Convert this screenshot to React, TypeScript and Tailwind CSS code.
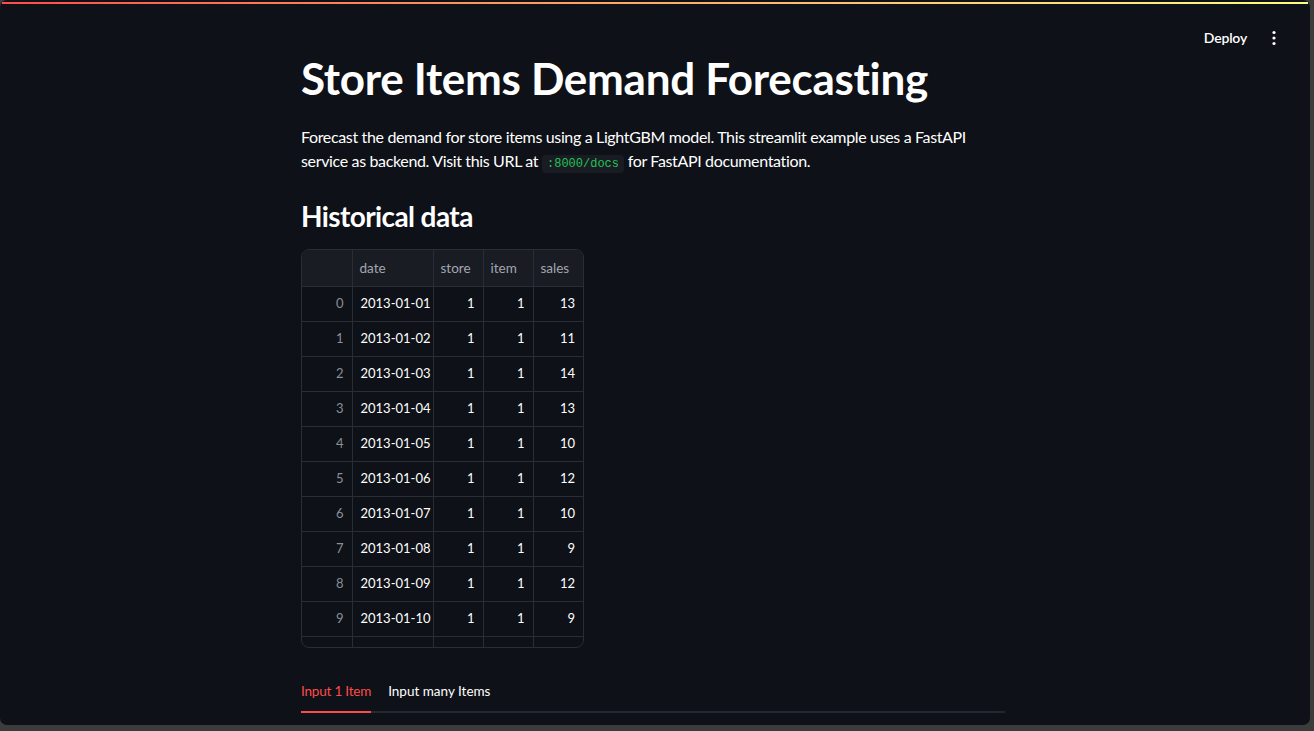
import React from 'react';

const rows = [
  ['2013-01-01', 1, 1, 13],
  ['2013-01-02', 1, 1, 11],
  ['2013-01-03', 1, 1, 14],
  ['2013-01-04', 1, 1, 13],
  ['2013-01-05', 1, 1, 10],
  ['2013-01-06', 1, 1, 12],
  ['2013-01-07', 1, 1, 10],
  ['2013-01-08', 1, 1, 9],
  ['2013-01-09', 1, 1, 12],
  ['2013-01-10', 1, 1, 9],
];

const App = () => {
  return (
    <div className="h-[731px] w-[1314px] overflow-hidden bg-[#3c3c3c] pr-[4px] pb-[6px] font-['Lato',sans-serif]">
      <div className="relative h-full rounded-[7px] bg-[#0e1117] overflow-hidden">
        {/* top decoration */}
        <div className="mx-[2px] mt-[2px] h-[2px] bg-gradient-to-r from-[#ff4b4b] to-[#fffd80]" />

        {/* header toolbar */}
        <div className="absolute top-[27px] right-[28px] flex items-center gap-[19px]">
          <button className="text-[14px] font-semibold text-white tracking-[-0.2px]">Deploy</button>
          <svg width="16" height="16" viewBox="0 0 16 16" className="text-white">
            <circle cx="8" cy="2.5" r="1.6" fill="currentColor" />
            <circle cx="8" cy="8" r="1.6" fill="currentColor" />
            <circle cx="8" cy="13.5" r="1.6" fill="currentColor" />
          </svg>
        </div>

        {/* main block */}
        <div className="mx-auto w-[704px] pt-[46px] -translate-x-[2px]">
          <h1 className="text-[44px] leading-[56px] font-bold text-white tracking-[-0.3px]">
            Store Items Demand Forecasting
          </h1>

          <p className="mt-[19px] text-[16px] leading-[24px] text-white tracking-[-0.35px]">
            Forecast the demand for store items using a LightGBM model. This streamlit example uses a FastAPI
            <br />
            service as backend. Visit this URL at{' '}
            <code className="rounded-[4px] bg-[#1a1c24] px-[5px] py-[2px] font-['Liberation_Mono',monospace] text-[12px] tracking-normal text-[#21c354]">
              :8000/docs
            </code>{' '}
            for FastAPI documentation.
          </p>

          <h2 className="mt-[22px] text-[28px] leading-[36px] font-bold text-white tracking-[-0.6px]">Historical data</h2>

          <div className="mt-[15px] w-[283px] h-[399px] overflow-hidden rounded-[8px] border border-[#2b2d35]">
            <table className="w-full table-fixed border-collapse text-[13px] whitespace-nowrap">
              <colgroup>
                <col className="w-[50px]" />
                <col className="w-[81px]" />
                <col className="w-[50px]" />
                <col className="w-[50px]" />
                <col className="w-[50px]" />
              </colgroup>
              <thead>
                <tr className="h-[36px] bg-[#1a1c24] text-[#a3a6b0] text-[13.5px]">
                  <th className="border-r border-b border-[#2b2d35]" />
                  <th className="border-r border-b border-[#2b2d35] px-[7px] text-left font-normal">date</th>
                  <th className="border-r border-b border-[#2b2d35] px-[7px] text-left font-normal">store</th>
                  <th className="border-r border-b border-[#2b2d35] px-[7px] text-left font-normal">item</th>
                  <th className="border-b border-[#2b2d35] px-[7px] text-left font-normal">sales</th>
                </tr>
              </thead>
              <tbody>
                {rows.map((r, i) => (
                  <tr key={i} className="h-[35px] text-white">
                    <td className="border-r border-b border-[#2b2d35] px-[8px] text-right text-[#8c8f98]">{i}</td>
                    <td className="border-r border-b border-[#2b2d35] px-[8px]">{r[0]}</td>
                    <td className="border-r border-b border-[#2b2d35] px-[8px] text-right">{r[1]}</td>
                    <td className="border-r border-b border-[#2b2d35] px-[8px] text-right">{r[2]}</td>
                    <td className="border-b border-[#2b2d35] px-[8px] text-right">{r[3]}</td>
                  </tr>
                ))}
                <tr className="h-[35px]">
                  <td className="border-r border-[#2b2d35]" />
                  <td className="border-r border-[#2b2d35]" />
                  <td className="border-r border-[#2b2d35]" />
                  <td className="border-r border-[#2b2d35]" />
                  <td />
                </tr>
              </tbody>
            </table>
          </div>

          {/* tabs */}
          <div className="mt-[33px] flex gap-[17px] border-b-[2px] border-[#262730] text-[13.5px]">
            <div className="-mb-[2px] border-b-[2px] border-[#ff4b4b] pb-[10px] text-[#ff4b4b] tracking-[-0.2px]">Input 1 Item</div>
            <div className="pb-[10px] text-white">Input many Items</div>
          </div>
        </div>
      </div>
    </div>
  );
};

export default App;
